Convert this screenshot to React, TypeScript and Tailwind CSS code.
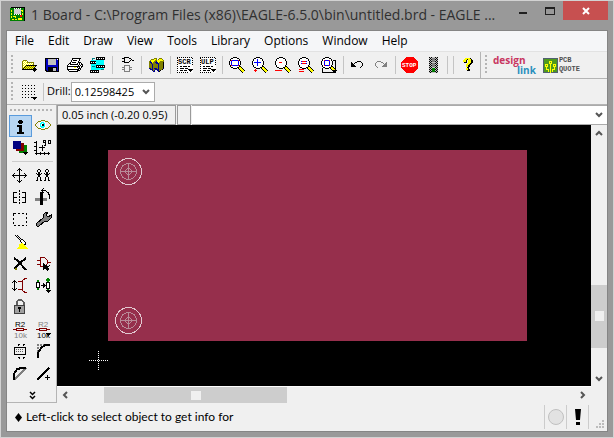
import type { ReactNode } from 'react';

interface IconProps {
    children: ReactNode;
}

interface Tool {
    name: string;
    icon: ReactNode;
}

const palette: Record<string, string> = {
    k: '#000000',
    w: '#ffffff',
    y: '#ffff00',
    o: '#808000',
    b: '#000090',
    c: '#00ffff',
    g: '#808080',
    l: '#c0c0c0',
    r: '#ff0000',
    m: '#800000',
    n: '#008000',
};

const Icon = ({ children }: IconProps) => (
    <svg viewBox="0 0 22 22" width="22" height="22" fill="none" shapeRendering="crispEdges" aria-hidden="true">
        {children}
    </svg>
);

// One character is one pixel, a dot is left empty
const Sprite = ({ x, y, rows }: { x: number; y: number; rows: string[] }) => (
    <>
        {rows.map((row, j) =>
            row.split('').map((c, i) =>
                palette[c] ? (
                    <rect key={`${i}-${j}`} x={x + i} y={y + j} width="1" height="1" fill={palette[c]} />
                ) : null
            )
        )}
    </>
);

const DropMark = ({ x = 14, y = 16 }: { x?: number; y?: number }) => (
    <Sprite x={x} y={y} rows={['kkkkk', '.kkk.', '..k..']} />
);

const Tiny = ({ x, y, fill = '#000', children }: { x: number; y: number; fill?: string; children: string }) => (
    <text x={x} y={y} fill={fill} fontSize="8" fontFamily="Liberation Sans, sans-serif">
        {children}
    </text>
);

const Lens = ({ children }: IconProps) => (
    <Icon>
        <path d="M13 13l5 5" stroke="#000" strokeWidth="4" />
        <path d="M13 13l5 5" stroke="#ffff00" strokeWidth="2" />
        <Sprite
            x={3}
            y={3}
            rows={[
                '....kkkk....',
                '..kkwwwwkk..',
                '.kwwwwwwwwk.',
                '.kwwwwwwwwk.',
                'kwwwwwwwwwwk',
                'kwwwwwwwwwwk',
                'kwwwwwwwwwwk',
                'kwwwwwwwwwwk',
                '.kwwwwwwwwk.',
                '.kwwwwwwwwk.',
                '..kkwwwwkk..',
                '....kkkk....',
            ]}
        />
        {children}
    </Icon>
);

const Sheet = ({ label }: { label: string }) => (
    <Icon>
        <path d="M3 4h16v15h-16z" fill="#fff" />
        <path d="M3.500 4v15M3 18.500h12M18.500 4v8M3 3.500h16" stroke="#000" strokeDasharray="1 1" />
        <text x="4" y="10" fill="#000" fontSize="7" fontFamily="Liberation Mono, monospace" fontWeight="bold">
            {label}
        </text>
        <path d="M6 12.500h2m1 0h4m1 0h2M6 14.500h4m1 0h3M6 16.500h3m1 0h3" stroke="#000" />
        <DropMark y={15} />
    </Icon>
);

const fileTools: Tool[] = [
    {
        name: 'Open',
        icon: (
            <Icon>
                <Sprite
                    x={4}
                    y={6}
                    rows={[
                        '.oooo..........',
                        'oywywo.........',
                        'owywyooooooo...',
                        'oywywywywywo...',
                        'owywywywywyo...',
                        'oywykkkkkkkkkkk',
                        'owykyoyoyoyoyk.',
                        'oykyoyoyoyoyk..',
                        'okyoyoyoyoykkk.',
                        'kkkkkkkkkkkkkkk',
                        '...........kkk.',
                        '............k..',
                    ]}
                />
            </Icon>
        ),
    },
    {
        name: 'Save',
        icon: (
            <Icon>
                <path d="M4 4h14v14h-13l-1-1z" fill="#000" />
                <path d="M5 5h12v12h-11l-1-1z" fill="#0000c0" />
                <path d="M7 5h8v6h-8z" fill="#c0c0c0" />
                <path d="M7 13h9v5h-9z" fill="#000" />
                <path d="M12 14h3v3h-3z" fill="#c0c0c0" />
                <path d="M16 5h1v1h-1z" fill="#fff" />
            </Icon>
        ),
    },
    {
        name: 'Print',
        icon: (
            <Icon>
                <Sprite
                    x={3}
                    y={4}
                    rows={[
                        '.....kkkkkkkkk..',
                        '.....kwwwwwwk...',
                        '....kwkkkkwwk...',
                        '....kwwwwwwk....',
                        '...kwkkkkwwkkk..',
                        '..kkwwwwwwkwkwk.',
                        '.kwkkkkkkkkwkwkk',
                        'kwwwwwwwwwwkwkwk',
                        'kkkkkkkkkkkkkwkk',
                        'kwwwwwwyywkwkwk.',
                        'kwwwwwwwwwwkkk..',
                        'kkkkkkkkkkkkwk..',
                        '.kwwwwwwwwkkk...',
                        '..kkkkkkkkk.....',
                    ]}
                />
            </Icon>
        ),
    },
    {
        name: 'CAM processor',
        icon: (
            <Icon>
                <path d="M4 6h7v12h-7zM9 3h8v13h-8z" fill="#00ffff" />
                <path d="M9 3h9v3h-9zM9 11h9v3h-9zM3 7h6v3h-6zM3 16h9v3h-9z" fill="#000" />
                <path d="M10 4.500h8M10 12.500h8M4 8.500h5M4 17.500h8" stroke="#fff" strokeDasharray="1 1" />
                <path d="M5.500 6v-1.500h2M14 15.500h2.500v-1M5 12.500h3" stroke="#008080" />
            </Icon>
        ),
    },
];

const gateTools: Tool[] = [
    {
        name: 'Schematic',
        icon: (
            <Icon>
                <path d="M8.500 3.500h4l3 2-3 3h-4zM6 4.500h2M6 7.500h2M16 6.500h2" stroke="#000" />
                <path d="M8.500 11.500h5v6h-5zM6 13.500h2M6 15.500h2M14 13.500h2M14 15.500h2" stroke="#808080" />
            </Icon>
        ),
    },
];

const libraryTools: Tool[] = [
    {
        name: 'Use library',
        icon: (
            <Icon>
                <Sprite
                    x={4}
                    y={4}
                    rows={[
                        '.....ooo..ooo..',
                        '..oooyyo.oyyyo.',
                        '.oyyyyooyyyyyyo',
                        'obyyyoobyyyoooo',
                        'obbyoobbbyooook',
                        'ooboooobbbooook',
                        'ooobooooobooook',
                        'ooobooooobooook',
                        'ooobooooobooook',
                        'ooobooooobooook',
                        'bbobobbboboooob',
                        '.bbboobbbboook.',
                        '...bob..bbok...',
                        '....bb...bk....',
                    ]}
                />
            </Icon>
        ),
    },
];

const scriptTools: Tool[] = [
    { name: 'Run script', icon: <Sheet label="SCR" /> },
    { name: 'Run ULP', icon: <Sheet label="ULP" /> },
];

const zoomTools: Tool[] = [
    {
        name: 'Zoom to fit',
        icon: (
            <Lens>
                <path d="M5.500 6.500h7v5h-7z" stroke="#0000ff" />
                <path d="M5 6h1v1h-1zM12 6h1v1h-1zM5 11h1v1h-1zM12 11h1v1h-1z" fill="#ff0000" />
            </Lens>
        ),
    },
    {
        name: 'Zoom in',
        icon: (
            <Lens>
                <path d="M5 8.500h7M8.500 5v7" stroke="#0000ff" />
                <path d="M5 16.500h3M6.500 15v3" stroke="#ff0000" />
            </Lens>
        ),
    },
    {
        name: 'Zoom out',
        icon: (
            <Lens>
                <path d="M7 8.500h3M3 16.500h7" stroke="#ff0000" />
            </Lens>
        ),
    },
    {
        name: 'Redraw',
        icon: (
            <Lens>
                <path d="M6 7.500h6M6 9.500h6" stroke="#0000ff" />
                <path d="M7 7.500h4M7 9.500h4M4 15.500h5M4 17.500h5" stroke="#ff0000" />
            </Lens>
        ),
    },
    {
        name: 'Zoom select',
        icon: (
            <Lens>
                <path d="M4.500 14v4.500h13v-12h-3" stroke="#000" />
                <path d="M6.500 6.500h5v5h-5z" stroke="#0000ff" />
                <path d="M6 6h1v1h-1zM11 6h1v1h-1zM6 11h1v1h-1zM11 11h1v1h-1z" fill="#ff0000" />
                <DropMark />
            </Lens>
        ),
    },
];

const undoTools: Tool[] = [
    {
        name: 'Undo',
        icon: (
            <Icon>
                <Sprite
                    x={4}
                    y={7}
                    rows={['......kkkk..', 'k...kk....k.', 'kk.k.......k', 'kkk........k', 'kkkk.......k', 'kkkkk.....k.', '.........k..']}
                />
            </Icon>
        ),
    },
    {
        name: 'Redo',
        icon: (
            <Icon>
                <Sprite
                    x={5}
                    y={7}
                    rows={['..gggg......', '.g....gg...g', 'g.......g.gg', 'g........ggg', 'g.......gggg', '.g.....ggggg', '..g.........']}
                />
            </Icon>
        ),
    },
];

const stopTools: Tool[] = [
    {
        name: 'Stop',
        icon: (
            <Icon>
                <path d="M7 3h7l5 5v6l-5 5h-7l-5-5v-6z" fill="#ff0000" />
                <text x="3" y="13" fill="#fff" fontSize="6" fontFamily="Liberation Mono, monospace" fontWeight="bold">
                    STOP
                </text>
            </Icon>
        ),
    },
    {
        name: 'Go',
        icon: (
            <Icon>
                <path d="M7 3h9v16h-9z" fill="#c0c0c0" />
                <path d="M7.500 3v16M9.500 3v16M13.500 3v16M15.500 3v16" stroke="#000" strokeDasharray="1 1" />
                <path d="M8.500 4v15M14.500 4v15" stroke="#000" strokeDasharray="1 1" />
                <circle cx="11.500" cy="6" r="2" fill="#808080" />
                <circle cx="11.500" cy="11" r="2" fill="#808080" />
                <circle cx="11.500" cy="16" r="2" fill="#008000" />
            </Icon>
        ),
    },
];

const helpTools: Tool[] = [
    {
        name: 'Help',
        icon: (
            <Icon>
                <Sprite
                    x={6}
                    y={4}
                    rows={[
                        '..yyyyyk..',
                        '.yyykyyyk.',
                        'yyyk.yyykk',
                        'yyyk.yyykk',
                        '.kkk.yyykk',
                        '....yyykk.',
                        '...yyykk..',
                        '...yykk...',
                        '...yykk...',
                        '....kk....',
                        '...yyk....',
                        '...yykk...',
                        '....kkk...',
                    ]}
                />
            </Icon>
        ),
    },
];

const toolGroups = [fileTools, gateTools, libraryTools, scriptTools, zoomTools, undoTools, stopTools, [], helpTools];

const infoTools: Tool[] = [
    {
        name: 'Info',
        icon: (
            <Icon>
                <path d="M10 5h3v1h1v2h-1v1h-3v-1h-1v-2h1zM8 10h5v7h2v2h-7v-2h2v-5h-2z" fill="#000" />
            </Icon>
        ),
    },
    {
        name: 'Show',
        icon: (
            <Icon>
                <Sprite
                    x={3}
                    y={5}
                    rows={[
                        '......oooo......',
                        '...ooo....ooo...',
                        '..o..wcccw...o..',
                        '.o..wccwccw...o.',
                        'o...wcwkkcw....o',
                        'o...wcwkkcw....o',
                        '.o..wcccccw...o.',
                        '..o..wcccw...o..',
                        '...ooo....ooo...',
                        '......oooo......',
                    ]}
                />
            </Icon>
        ),
    },
    {
        name: 'Display',
        icon: (
            <Icon>
                <path d="M10 8h8v8h-8z" fill="#008000" />
                <path d="M7 6h8v8h-8z" fill="#800000" />
                <path d="M4 4h8v8h-8z" fill="#000080" />
                <DropMark y={15} />
            </Icon>
        ),
    },
    {
        name: 'Mark',
        icon: (
            <Icon>
                <path d="M4.500 4v14M3 16.500h15M2 5.500h2M2 9.500h2M2 13.500h2M8.500 15v3M12.500 15v3M16.500 15v3M7 10.500h6M10.500 8v6" stroke="#000" />
                <path d="M11.500 3.500h2v2h-2zM13.500 5v3h-2M16.500 3.500h2v3h-2z" stroke="#000" />
            </Icon>
        ),
    },
];

const editTools: (Tool | null)[] = [
    {
        name: 'Move',
        icon: (
            <Icon>
                <path d="M3 11.500h15M10.500 4v15" stroke="#000" />
                <Sprite x={8} y={4} rows={['..k..', '.kkk.', 'k.k.k']} />
                <Sprite x={8} y={16} rows={['k.k.k', '.kkk.', '..k..']} />
                <Sprite x={3} y={9} rows={['..k', '.k.', 'kkk', '.k.', '..k']} />
                <Sprite x={15} y={9} rows={['k..', '.k.', 'kkk', '.k.', 'k..']} />
            </Icon>
        ),
    },
    {
        name: 'Copy',
        icon: (
            <Icon>
                {[4, 12].map((x) => (
                    <Sprite
                        key={x}
                        x={x}
                        y={5}
                        rows={['..kk..', '.k..k.', '.k..k.', '..kk..', 'k.kk.k', '.kkkk.', '..kk..', '..kk..', '.k..k.', '.k..k.', '.k..k.', 'kk..kk']}
                    />
                ))}
            </Icon>
        ),
    },
    {
        name: 'Mirror',
        icon: (
            <Icon>
                <path d="M4 6.500h4M4 11.500h4M4 16.500h4M4.500 6v11" stroke="#000" />
                <path d="M13 6.500h4M13 11.500h4M13 16.500h4M16.500 6v11" stroke="#000" />
                <path d="M10.500 4v15" stroke="#000" strokeDasharray="2 1" />
            </Icon>
        ),
    },
    {
        name: 'Rotate',
        icon: (
            <Icon>
                <path d="M3 12h12v3h-12z" fill="#808080" />
                <path d="M8 6h3v13h-3z" fill="#000" />
                <path d="M10 4.500h3l3 2 1 2v4M9 5l3-3M9 4l3 3" stroke="#000" />
            </Icon>
        ),
    },
    {
        name: 'Group',
        icon: (
            <Icon>
                <path d="M4.500 5.500h13v12h-13z" stroke="#000" strokeDasharray="2 2" />
            </Icon>
        ),
    },
    {
        name: 'Change',
        icon: (
            <Icon>
                <path d="M4 16l7-6v-3l3-3h2l-2 3 2 2 3-2v3l-3 3h-3l-6 5h-2z" fill="#808080" stroke="#000" />
            </Icon>
        ),
    },
    {
        name: 'Paste',
        icon: (
            <Icon>
                <path d="M6 5l6 6M8 5l5 5" stroke="#000" />
                <path d="M11 11l2-2 4 4-1 2-2-1z" fill="#fff" stroke="#000" />
                <path d="M10 14l3-1 2 2 2 1 2 3h-12l3-3z" fill="#ffff00" />
            </Icon>
        ),
    },
    null,
    {
        name: 'Delete',
        icon: (
            <Icon>
                <path d="M5 6l4 3 8 9M17 6l-6 5-6 6" stroke="#000" strokeWidth="2" />
                <path d="M6 16h2v2h-2z" fill="#808000" />
            </Icon>
        ),
    },
    {
        name: 'Add',
        icon: (
            <Icon>
                <path d="M8.500 5.500h4l3 3v3l-3 3h-4zM5 8.500h3M5 12.500h3M16 10.500h3" stroke="#800000" />
                <Sprite x={11} y={11} rows={['k.......', 'kk......', 'kkkk..k.', 'kkkkkk..', 'kkkkk...', 'kkkkkk..', 'k..kkk..', '....k...']} />
            </Icon>
        ),
    },
    {
        name: 'Pinswap',
        icon: (
            <Icon>
                <Sprite
                    x={3}
                    y={6}
                    rows={['..k..', '.kkk.', 'k.k.k', '..k..', '..k..', '..k..', '..k..', '..k..', 'k.k.k', '.kkk.', '..k..']}
                />
                <path d="M18 4.500h-2l-2.500 2v10l2.500 2h2M9 7.500h4M9 15.500h4" stroke="#800000" />
            </Icon>
        ),
    },
    {
        name: 'Replace',
        icon: (
            <Icon>
                <Sprite
                    x={4}
                    y={4}
                    rows={[
                        '...........nn..',
                        '..........nnnn.',
                        '.nn.......nnnn.',
                        '.nn........nn..',
                        'kkkk......kkkk.',
                        'kwwk...k..kwwk.',
                        'kwwk...kk.kwwk.',
                        'kwwk.kkkkkkwwk.',
                        'kwwk...kk.kwwk.',
                        'kkkk...k..kwwk.',
                        '.nn.......kkkk.',
                        '.nn........nn..',
                        '..........kkkkk',
                        '...........kkk.',
                        '............k..',
                    ]}
                />
            </Icon>
        ),
    },
    {
        name: 'Lock',
        icon: (
            <Icon>
                <path d="M7.500 10v-4l2-2h3l2 2v4" stroke="#606060" strokeWidth="2" />
                <path d="M5.500 9.500h10v8h-10z" fill="#a0a0a0" stroke="#404040" />
                <path d="M9 11h3v2h-1v3h-1v-3h-1z" fill="#000" />
            </Icon>
        ),
    },
    null,
    {
        name: 'Name',
        icon: (
            <Icon>
                <Tiny x={6} y={9}>R2</Tiny>
                <path d="M4 11.500h3M15 11.500h3M7.500 10.500h7v2h-7z" stroke="#800000" />
                <Tiny x={5} y={20} fill="#808080">10k</Tiny>
            </Icon>
        ),
    },
    {
        name: 'Value',
        icon: (
            <Icon>
                <Tiny x={6} y={9} fill="#808080">R2</Tiny>
                <path d="M4 11.500h3M15 11.500h3M7.500 10.500h7v2h-7z" stroke="#800000" />
                <Tiny x={5} y={20}>10k</Tiny>
                <DropMark y={15} />
            </Icon>
        ),
    },
    {
        name: 'Smash',
        icon: (
            <Icon>
                <path d="M5.500 7.500h11v7h-11z" stroke="#000" />
                <path d="M9 4.500h2m3 0h2M9 17.500h2m3 0h2M14 5.500h1M9 5.500h1M10 18.500h1M14 18.500h1" stroke="#000" />
                <path d="M7 9.500h8M7 11.500h8" stroke="#606060" strokeDasharray="1 1" />
            </Icon>
        ),
    },
    {
        name: 'Miter',
        icon: (
            <Icon>
                <path d="M6 12v-7h7" stroke="#808080" strokeWidth="2" strokeDasharray="2 1" />
                <path d="M6 18v-5l3-5 4-3h5" stroke="#000" strokeWidth="2" />
            </Icon>
        ),
    },
    {
        name: 'Split',
        icon: (
            <Icon>
                <path d="M5 18l12-12" stroke="#808080" strokeWidth="2" />
                <path d="M5 18v-6l3-5 5-1h4" stroke="#000" strokeWidth="2" />
            </Icon>
        ),
    },
    {
        name: 'Route',
        icon: (
            <Icon>
                <path d="M5 18l12-12" stroke="#000" strokeWidth="2" />
                <path d="M13 15.500h5M15.500 13v5" stroke="#000" />
            </Icon>
        ),
    },
];

const menus = ['File', 'Edit', 'Draw', 'View', 'Tools', 'Library', 'Options', 'Window', 'Help'];

const Arrow = ({ dir }: { dir: 'left' | 'right' | 'up' | 'down' }) => {
    const paths = {
        left: 'M7 2l-3 3 3 3',
        right: 'M3 2l3 3-3 3',
        up: 'M2 7l3-3 3 3',
        down: 'M2 3l3 3 3-3',
    };
    return (
        <svg viewBox="0 0 10 10" width="10" height="10" fill="none" stroke="#555" strokeWidth="2" aria-hidden="true">
            <path d={paths[dir]} />
        </svg>
    );
};

const ToolButton = ({ tool, active }: { tool: Tool; active?: boolean }) => (
    <button
        type="button"
        aria-label={tool.name}
        className={
            active
                ? 'h-[22px] w-[23px] shrink-0 bg-[#b8d6f2] outline outline-1 -outline-offset-1 outline-[#5a9bdc]'
                : 'h-[22px] w-[23px] shrink-0'
        }
    >
        {tool.icon}
    </button>
);

const Grip = () => (
    <svg width="3" height="20" className="mx-1 shrink-0" shapeRendering="crispEdges" aria-hidden="true">
        <path d="M1 0v20" stroke="#b4b4b4" strokeWidth="2" strokeDasharray="2 2" />
    </svg>
);

const Divider = () => <span className="mx-[2px] h-[18px] w-[2px] shrink-0 border-l border-[#c4c4c4]" />;

const Pad = ({ x, y }: { x: number; y: number }) => (
    <g transform={`translate(${x} ${y})`} stroke="#b98b98" fill="none" shapeRendering="crispEdges">
        <circle r="13" stroke="#e2c8d0" />
        <circle r="8" />
        <path d="M-8 0h16M0 -8v16M-4 0l4-4 4 4-4 4z" />
    </g>
);

const TitleBar = () => (
    <header className="flex h-[29px] shrink-0 items-start pl-[9px]">
        <svg width="15" height="15" viewBox="0 0 15 15" className="mt-[6px] shrink-0" shapeRendering="crispEdges" aria-hidden="true">
            <path d="M1 0h14v14h-14z" fill="#000" />
            <path d="M0 1h14v13h-14z" fill="#008000" />
            <path d="M4 2h7v5h-7z" fill="#d0d0d0" />
            <path d="M4 1.500h7M4 7.500h7" stroke="#fff" strokeDasharray="1 1" />
            <path d="M1.500 3v9M3 9.500h3M5.500 9v3M2 12.500h5M11 3.500h2M12.500 3v5" stroke="#ffff00" strokeDasharray="2 1" />
            <path d="M10 8h2v2h-2z" fill="#ff0000" />
            <path d="M8 11h4v2h-4z" fill="#ffff00" />
        </svg>
        <h1 className="min-w-0 flex-1 truncate pl-[6px] text-[14px] leading-[27px] text-[#303030]">
            1 Board - C:\Program Files (x86)\EAGLE-6.5.0\bin\untitled.brd - EAGLE ...
        </h1>
        <button type="button" aria-label="Minimize" className="flex h-[19px] w-[26px] items-end justify-center pb-[6px]">
            <span className="h-[2px] w-2 bg-[#202020]" />
        </button>
        <button type="button" aria-label="Maximize" className="flex h-[19px] w-[27px] items-center justify-center">
            <span className="h-2 w-[10px] border border-t-2 border-[#202020]" />
        </button>
        <button type="button" aria-label="Close" className="mr-[5px] flex h-[19px] w-[45px] items-center justify-center bg-[#c75050]">
            <svg width="8" height="8" viewBox="0 0 8 8" stroke="#fff" strokeWidth="2" aria-hidden="true">
                <path d="M1 1l6 6M7 1l-6 6" />
            </svg>
        </button>
    </header>
);

const App = () => {
    return (
        <div className="flex h-screen flex-col border border-[#d2d2d2] bg-[#999999] font-['Open_Sans','Noto_Sans',sans-serif] text-xs text-black">
            <TitleBar />

            <div className="mx-[5px] mb-[5px] flex min-h-0 flex-1 flex-col border border-[#858585] bg-[#f0f0f0]">
                {/* Menu */}
                <nav className="flex h-5 shrink-0 items-center bg-[#f5f6f8] pl-px">
                    {menus.map((menu) => (
                        <button key={menu} type="button" className="px-[7px]">
                            {menu}
                        </button>
                    ))}
                </nav>

                {/* Action toolbar */}
                <div className="flex h-7 shrink-0 items-center border-y border-t-[#e2e2e2] border-b-[#b4b4b4]">
                    <Grip />
                    {toolGroups.map((group, i) => (
                        <div key={i} className="flex items-center">
                            {i > 0 && <Divider />}
                            {group.map((tool) => (
                                <ToolButton key={tool.name} tool={tool} />
                            ))}
                        </div>
                    ))}
                    <span className="w-px self-stretch bg-[#b4b4b4]" />
                    <Grip />
                    <a href="#design-link" className="flex flex-col pl-px text-[10px] leading-[10px] font-bold">
                        <span className="text-[#c8365f]">design</span>
                        <span className="pl-6 text-[#2a8fbd]">link</span>
                    </a>
                    <a href="#pcb-quote" className="flex items-center gap-px pl-[7px] font-['Liberation_Mono',monospace] text-[7px] leading-[9px] font-bold text-[#505050]">
                        <svg width="15" height="15" viewBox="0 0 15 15" shapeRendering="crispEdges" aria-hidden="true">
                            <path d="M0 0h15v15h-15z" fill="#506070" />
                            <path d="M1 1h13v13h-13z" fill="#4f9a1c" />
                            <path d="M7.500 5v10M3.500 8v3h2v3M11.500 7v4h-2v3" stroke="#ffff00" fill="none" />
                            <path d="M6 3h3v3h-3zM2 6h3v3h-3zM10 6h3v3h-3z" fill="#ffff00" />
                            <path d="M7 4h1v1h-1zM3 7h1v1h-1zM11 7h1v1h-1z" fill="#4f9a1c" />
                        </svg>
                        <span>
                            PCB
                            <br />
                            QUOTE
                        </span>
                    </a>
                </div>

                {/* Parameter toolbar */}
                <div className="flex h-[26px] shrink-0 items-center border-b border-[#b4b4b4] text-[11px]">
                    <Grip />
                    <button type="button" aria-label="Grid" className="h-[22px] w-[23px]">
                        <Icon>
                            {[4, 7, 10, 13, 16].map((y) => (
                                <path key={y} d={`M4 ${y}.500h14`} stroke="#000" strokeDasharray="1 2" />
                            ))}
                            <DropMark />
                        </Icon>
                    </button>
                    <Divider />
                    <label htmlFor="drill">Drill:</label>
                    <div className="grid h-5 w-[84px] items-center border border-[#ababab] bg-white">
                        <select id="drill" className="col-start-1 row-start-1 appearance-none pl-[3px] leading-4">
                            <option>0.12598425</option>
                        </select>
                        <span className="pointer-events-none col-start-1 row-start-1 mr-[3px] justify-self-end">
                            <Arrow dir="down" />
                        </span>
                    </div>
                </div>

                <div className="flex min-h-0 flex-1">
                    {/* Drawing tools */}
                    <aside className="flex w-[50px] shrink-0 flex-col border-r border-b border-[#b4b4b4] pl-[2px]">
                        <svg width="46" height="10" shapeRendering="crispEdges" aria-hidden="true">
                            <path d="M1 5h44" stroke="#b4b4b4" strokeWidth="2" strokeDasharray="2 2" />
                        </svg>
                        <div className="flex flex-wrap">
                            {infoTools.map((tool, i) => (
                                <ToolButton key={tool.name} tool={tool} active={i === 0} />
                            ))}
                        </div>
                        <span className="mx-[3px] my-[2px] h-px shrink-0 bg-[#cccccc]" />
                        <div className="flex flex-wrap">
                            {editTools.map((tool, i) =>
                                tool ? <ToolButton key={tool.name} tool={tool} /> : <span key={i} className="h-[22px] w-[23px]" />
                            )}
                        </div>
                        <button type="button" aria-label="More tools" className="flex flex-1 items-center justify-center pt-1">
                            <svg width="7" height="9" viewBox="0 0 7 9" fill="none" stroke="#000" aria-hidden="true">
                                <path d="M1 1l2.500 2.500L6 1M1 5l2.500 2.500L6 5" strokeWidth="1.500" />
                            </svg>
                        </button>
                    </aside>

                    <main className="flex min-w-0 flex-1 flex-col">
                        <div className="flex h-5 shrink-0">
                            <output className="w-[119px] shrink-0 border border-[#9a9a9a] px-1 text-[11px] leading-[18px] whitespace-nowrap">
                                0.05 inch (-0.20 0.95)
                            </output>
                            <span className="ml-px w-[14px] border border-[#9a9a9a]" />
                            <div className="ml-px flex flex-1 items-center border-y border-[#ababab] bg-white">
                                <input type="text" aria-label="Command line" className="h-full min-w-0 flex-1 px-1 outline-none" />
                                <button type="button" aria-label="Command history" className="pr-[3px]">
                                    <Arrow dir="down" />
                                </button>
                            </div>
                        </div>

                        <div className="flex min-h-0 flex-1">
                            <div className="min-w-0 flex-1 border-b border-white bg-black">
                                <svg width="100%" height="100%" className="block" aria-label="Board layout">
                                    <rect x="51" y="25" width="419" height="191" fill="#962f4c" />
                                    <Pad x={71.5} y={46.5} />
                                    <Pad x={71.5} y={195.5} />
                                    <path d="M32 235.500h19M41.500 226v19" stroke="#fff" strokeDasharray="1 1" shapeRendering="crispEdges" />
                                </svg>
                            </div>
                            <div className="flex w-4 shrink-0 flex-col items-center">
                                <button type="button" aria-label="Scroll up" className="py-[3px]">
                                    <Arrow dir="up" />
                                </button>
                                <div className="flex min-h-0 w-full flex-1 flex-col">
                                    <span className="grow-[143] basis-0" />
                                    <span className="flex grow-[63] basis-0 items-center justify-center bg-[#cdcdcd]">
                                        <span className="h-[10px] w-[9px] bg-[#f0f0f0]" />
                                    </span>
                                    <span className="grow-[23] basis-0" />
                                </div>
                                <button type="button" aria-label="Scroll down" className="py-[3px]">
                                    <Arrow dir="down" />
                                </button>
                            </div>
                        </div>

                        <div className="mr-4 flex h-4 shrink-0 items-center">
                            <button type="button" aria-label="Scroll left" className="px-[3px]">
                                <Arrow dir="left" />
                            </button>
                            <div className="flex h-full flex-1">
                                <span className="grow-[31] basis-0" />
                                <span className="flex grow-[183] basis-0 items-center justify-center bg-[#cdcdcd]">
                                    <span className="h-[9px] w-[10px] bg-[#f0f0f0]" />
                                </span>
                                <span className="grow-[287] basis-0" />
                            </div>
                            <button type="button" aria-label="Scroll right" className="px-[3px]">
                                <Arrow dir="right" />
                            </button>
                        </div>
                    </main>
                </div>

                {/* Status bar */}
                <footer className="flex h-7 shrink-0 items-center">
                    <p className="flex flex-1 items-center gap-1 pl-2 font-['Lato','Open_Sans',sans-serif]">
                        <svg width="7" height="9" viewBox="0 0 7 9" aria-hidden="true">
                            <path d="M3.500 0L7 4.500 3.500 9 0 4.500z" />
                        </svg>
                        Left-click to select object to get info for
                    </p>
                    <span className="flex h-6 w-[22px] items-center justify-center border-l border-[#cccccc]">
                        <span className="h-4 w-4 rounded-full border border-[#c0c0c0] bg-[#e2e2e2]" />
                    </span>
                    <span className="flex h-6 w-[23px] items-center justify-center border-x border-[#cccccc]">
                        <svg width="6" height="16" viewBox="0 0 6 16" aria-hidden="true">
                            <path d="M0 0h6l-1 11h-4zM1 13h4v3h-4z" />
                        </svg>
                    </span>
                    <svg width="18" height="24" shapeRendering="crispEdges" fill="#bcbcbc" aria-hidden="true">
                        <path d="M13 15h2v2h-2zM13 18h2v2h-2zM10 18h2v2h-2zM13 21h2v2h-2zM10 21h2v2h-2zM7 21h2v2h-2z" />
                    </svg>
                </footer>
            </div>
        </div>
    );
};

export default App;
